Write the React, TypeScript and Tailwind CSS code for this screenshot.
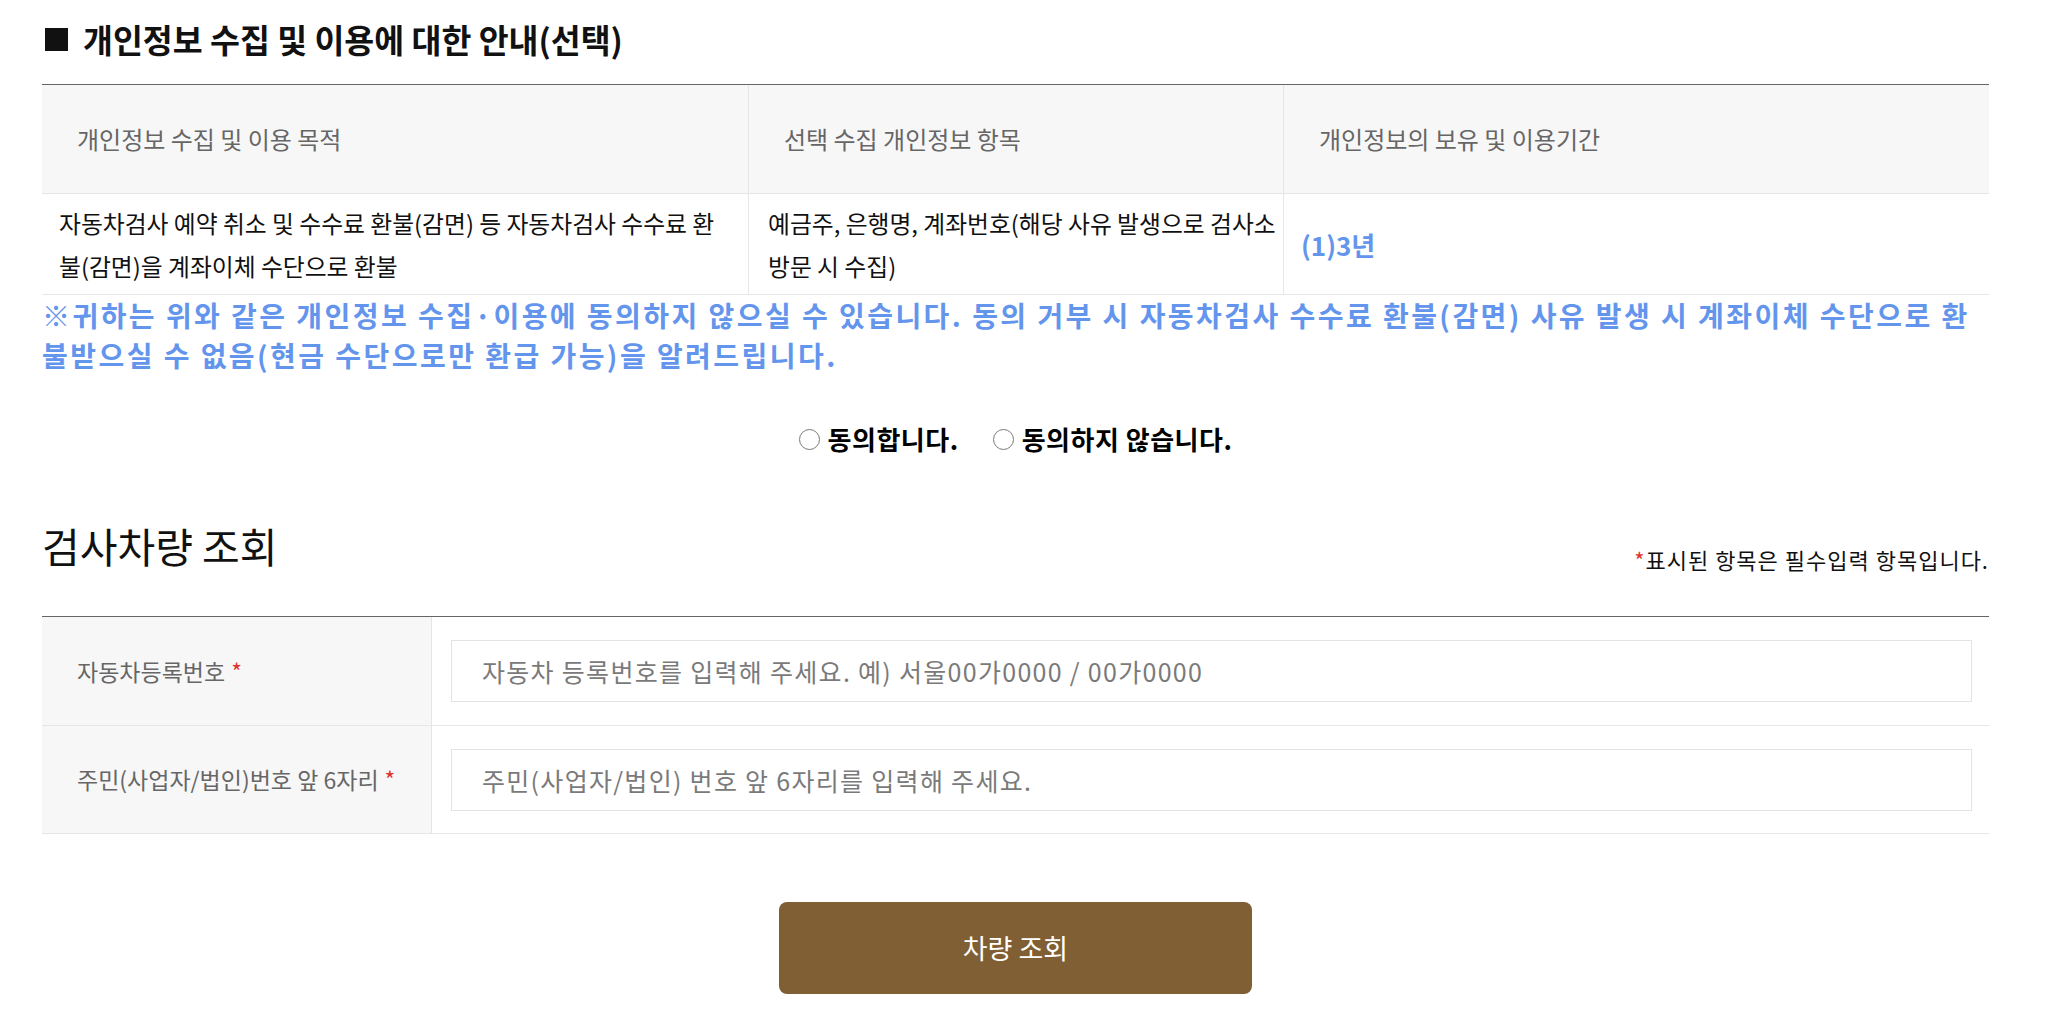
import React from "react";

const FONT = "font-['Noto_Sans_CJK_KR','Noto_Sans',sans-serif]";

function Radio({ label }: { label: string }) {
  return (
    <label className="flex items-center gap-[8px]">
      <span className="block w-[21px] h-[21px] rounded-full border-[1.5px] border-[#7a7a7a] bg-white" />
      <span className="text-[26px] font-bold tracking-[0.5px] text-black leading-[30px]">{label}</span>
    </label>
  );
}

export default function App() {
  return (
    <div className={`${FONT} bg-white w-[2051px] min-h-[1031px] text-[#222]`}>
      <div className="ml-[42px] w-[1947px] pt-[20px] pb-[38px]">
        <h2 className="text-[32.5px] font-bold leading-[38px] text-[#111] flex items-center">
          <span className="inline-block w-[23px] h-[23px] bg-[#111] ml-[3px] mr-[15px]" />
          개인정보 수집 및 이용에 대한 안내(선택)
        </h2>

        <div className="mt-[26px] border-t border-[#666]">
          <div className="grid grid-cols-[706px_535px_706px] bg-[#f7f7f7] h-[109px] border-b border-[#e6e6e6]">
            <div className="flex items-center pl-[35px] text-[24px] text-[#666]">개인정보 수집 및 이용 목적</div>
            <div className="flex items-center pl-[35px] text-[24px] text-[#666] border-l border-[#e6e6e6]">선택 수집 개인정보 항목</div>
            <div className="flex items-center pl-[35px] text-[24px] text-[#666] border-l border-[#e6e6e6]">개인정보의 보유 및 이용기간</div>
          </div>
          <div className="grid grid-cols-[706px_535px_706px] h-[101px] border-b border-[#e6e6e6]">
            <div className="pl-[17px] pt-[7px] text-[23.8px] leading-[43px] text-[#111] whitespace-nowrap">
              자동차검사 예약 취소 및 수수료 환불(감면) 등 자동차검사 수수료 환<br />불(감면)을 계좌이체 수단으로 환불
            </div>
            <div className="pl-[19px] pt-[7px] text-[23.8px] leading-[43px] text-[#111] border-l border-[#e6e6e6] whitespace-nowrap">
              예금주, 은행명, 계좌번호(해당 사유 발생으로 검사소<br />방문 시 수집)
            </div>
            <div className="flex items-center pl-[17px] border-l border-[#e6e6e6]">
              <span className="text-[26px] font-bold text-[#6495ed]">(1)3년</span>
            </div>
          </div>
        </div>

        <p className="mt-0 text-[28px] font-bold leading-[40px] tracking-[2.45px] text-[#6495ed] whitespace-nowrap">
          ※귀하는 위와 같은 개인정보 수집·이용에 동의하지 않으실 수 있습니다. 동의 거부 시 자동차검사 수수료 환불(감면) 사유 발생 시 계좌이체 수단으로 환<br />
          불받으실 수 없음(현금 수단으로만 환급 가능)을 알려드립니다.
        </p>

        <div className="mt-[49px] flex justify-center items-center gap-[34px]">
          <Radio label="동의합니다." />
          <Radio label="동의하지 않습니다." />
        </div>

        <div className="mt-[67px] flex items-end justify-between">
          <h3 className="text-[41px] leading-[48px] font-normal text-[#111]">검사차량 조회</h3>
          <p className="text-[22px] leading-[26px] tracking-[1px] text-[#111] mb-[-3px]">
            <span className="text-[#e0332f]">*</span>표시된 항목은 필수입력 항목입니다.
          </p>
        </div>

        <div className="mt-[47px] border-t border-[#666]">
          <div className="grid grid-cols-[389px_1558px] h-[109px] border-b border-[#e6e6e6]">
            <div className="bg-[#f7f7f7] flex items-center pl-[35px] text-[23px] text-[#666]">
              자동차등록번호<span className="text-[#e0332f] ml-[6px]">*</span>
            </div>
            <div className="flex items-center pl-[19px] pr-[17px] border-l border-[#e6e6e6]">
              <input
                className="w-full h-[62px] border border-[#e3e3e3] px-[30px] text-[25px] tracking-[1.3px] text-[#333] placeholder:text-[#7a7a7a] outline-none"
                placeholder="자동차 등록번호를 입력해 주세요. 예) 서울00가0000 / 00가0000"
              />
            </div>
          </div>
          <div className="grid grid-cols-[389px_1558px] h-[108px] border-b border-[#e6e6e6]">
            <div className="bg-[#f7f7f7] flex items-center pl-[35px] text-[23px] text-[#666]">
              주민(사업자/법인)번호 앞 6자리<span className="text-[#e0332f] ml-[6px]">*</span>
            </div>
            <div className="flex items-center pl-[19px] pr-[17px] border-l border-[#e6e6e6]">
              <input
                className="w-full h-[62px] border border-[#e3e3e3] px-[30px] text-[25px] tracking-[1.3px] text-[#333] placeholder:text-[#7a7a7a] outline-none"
                placeholder="주민(사업자/법인) 번호 앞 6자리를 입력해 주세요."
              />
            </div>
          </div>
        </div>

        <div className="mt-[68px] flex justify-center">
          <button className="w-[473px] h-[92px] rounded-[8px] bg-[#7f5f33] text-white text-[27px]">차량 조회</button>
        </div>
      </div>
    </div>
  );
}
